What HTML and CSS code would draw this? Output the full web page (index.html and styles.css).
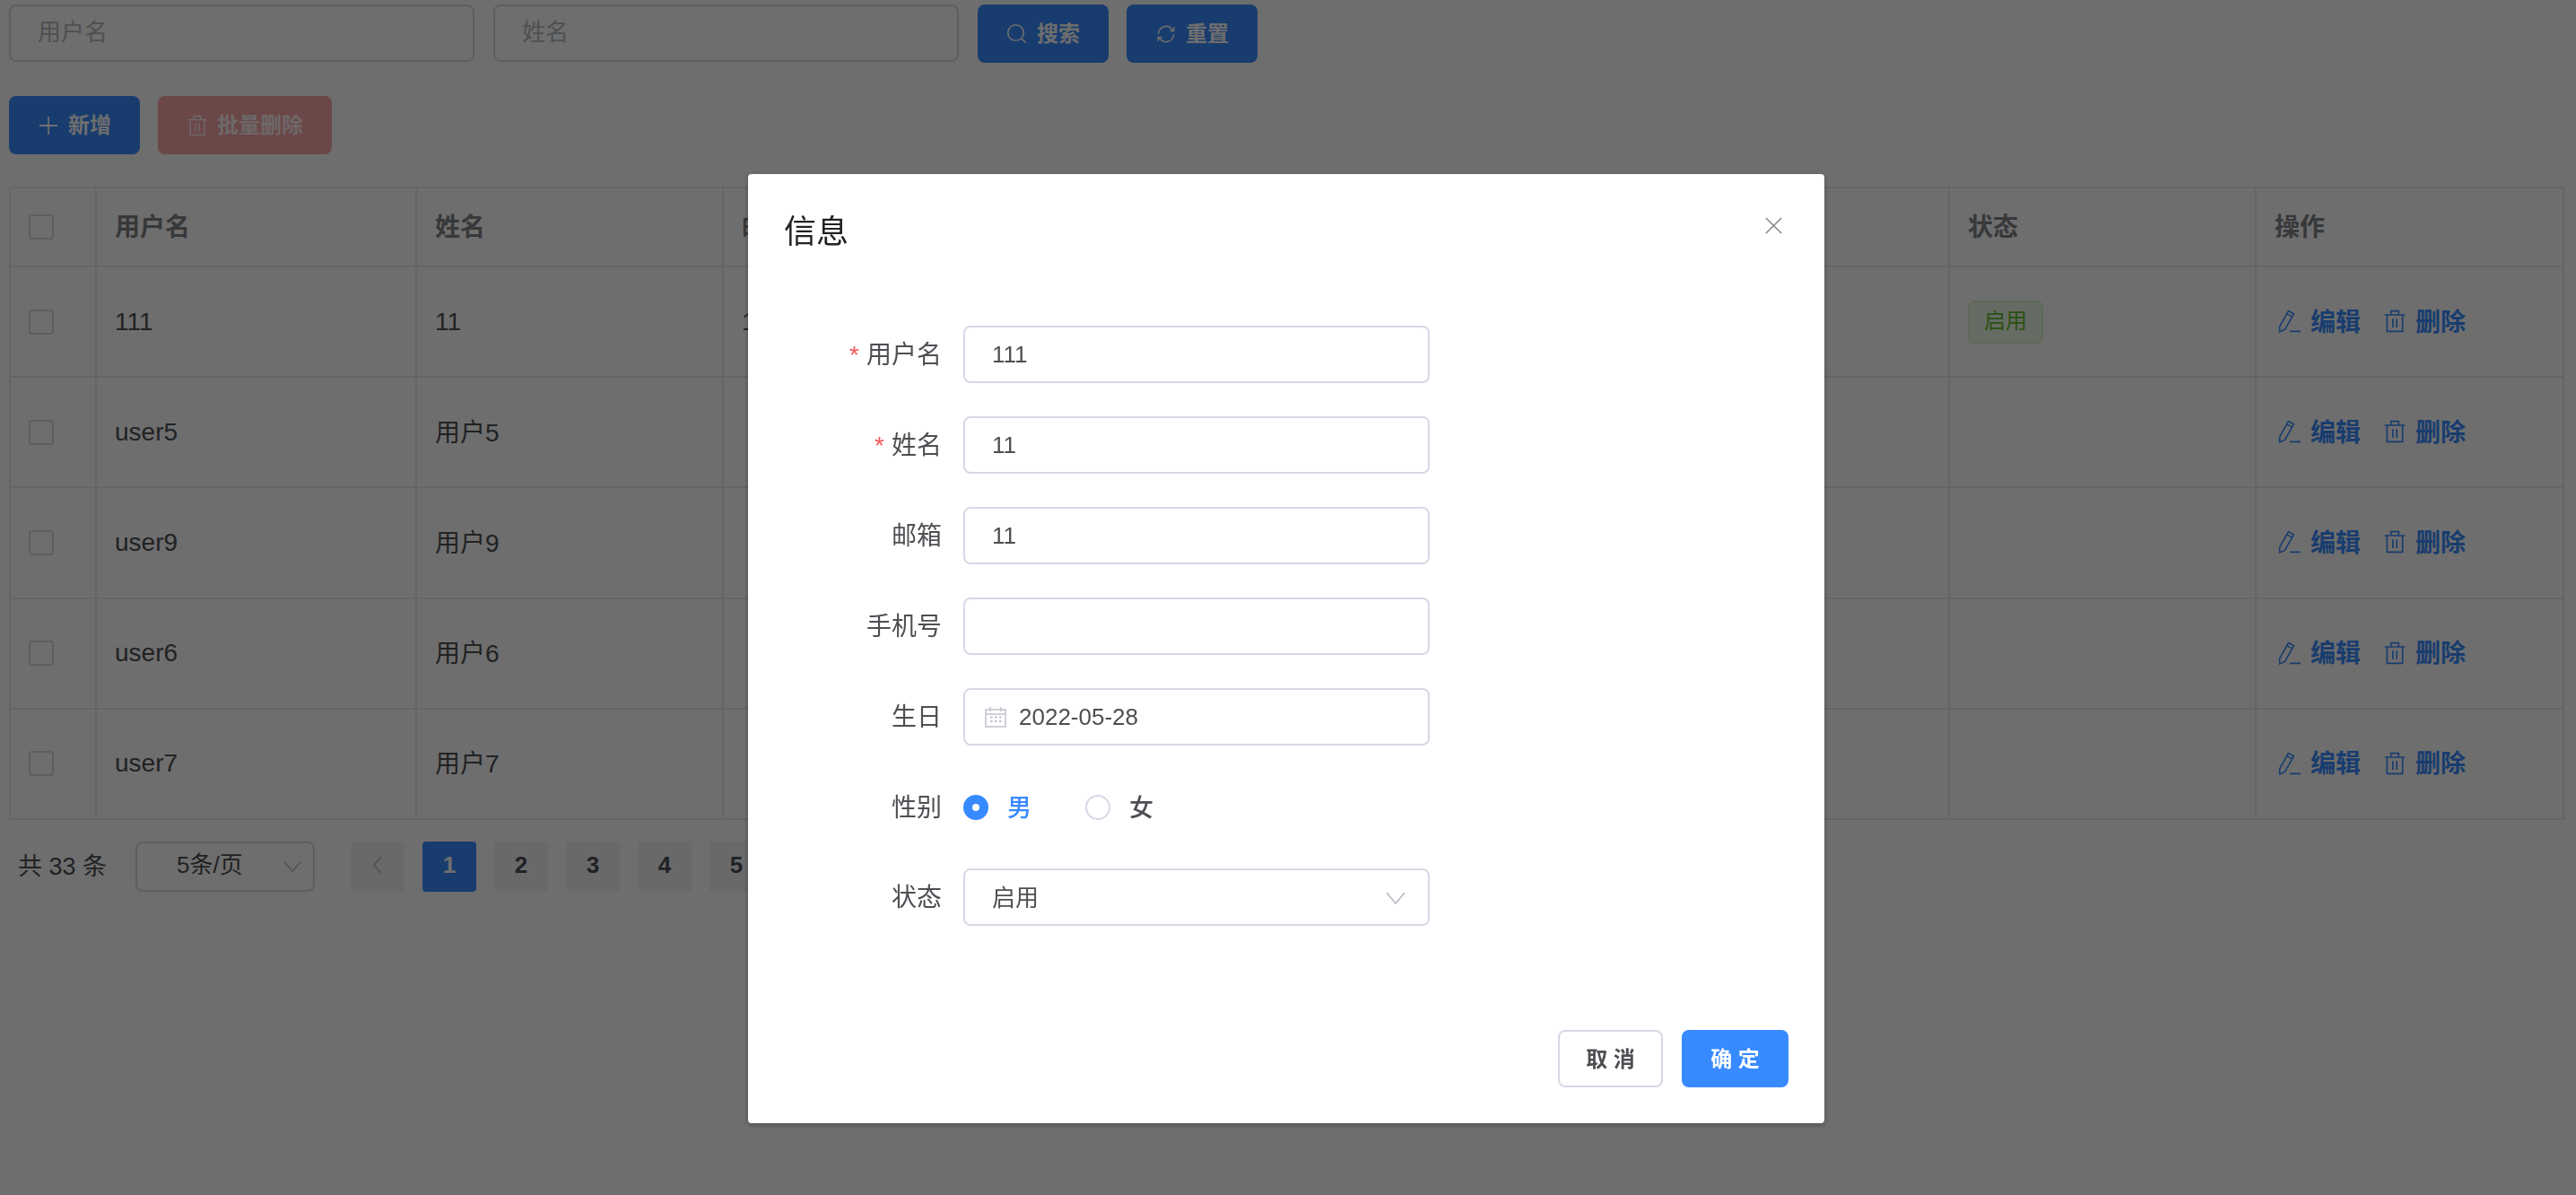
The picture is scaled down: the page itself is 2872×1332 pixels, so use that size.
FILE: index.html
```html
<!DOCTYPE html>
<html lang="zh-CN">
<head>
<meta charset="utf-8">
<title>用户管理</title>
<link rel="stylesheet" href="styles.css">
</head>
<body>
<svg class="defs" width="0" height="0" aria-hidden="true">
  <symbol id="i-trash" viewBox="0 0 24 24"><path d="M1.500 5.500h21M8 5.500V1.500h8v4M4 5.500v17h16v-17M10 9.500v9M14 9.500v9" fill="none" stroke="currentColor" stroke-width="1.500"/></symbol>
  <symbol id="i-edit" viewBox="0 0 24 24"><path d="M1.500 17.500L10.500 1.500l5.500 3L7 20.500 1.500 23zM9 4.500l5.500 3M12 22.500h11" fill="none" stroke="currentColor" stroke-width="1.500"/></symbol>
  <symbol id="i-search" viewBox="0 0 24 24"><circle cx="10.500" cy="10.500" r="8.800" fill="none" stroke="currentColor" stroke-width="1.600"/><path d="M17 17l4.500 4.500" stroke="currentColor" stroke-width="1.600"/></symbol>
  <symbol id="i-refresh" viewBox="0 0 24 24"><path d="M3.500 12a8.500 8.500 0 0 1 15-5.500l1.500 1.800M20.500 12a8.500 8.500 0 0 1-15 5.500L4 15.700M16.500 8.500h4.200V4M7.500 15.500H3.300V20" fill="none" stroke="currentColor" stroke-width="1.500"/></symbol>
  <symbol id="i-plus" viewBox="0 0 24 24"><path d="M2 12h20M12 2v20" stroke="currentColor" stroke-width="1.800"/></symbol>
  <symbol id="i-down" viewBox="0 0 24 24"><path d="M2 7l10 12L22 7" fill="none" stroke="currentColor" stroke-width="1.500"/></symbol>
</svg>

<main class="page">
  <div class="search-row">
    <div class="field">用户名</div>
    <div class="field">姓名</div>
    <button class="btn primary"><svg class="btn-icon"><use href="#i-search"/></svg><span>搜索</span></button>
    <button class="btn primary"><svg class="btn-icon"><use href="#i-refresh"/></svg><span>重置</span></button>
  </div>
  <div class="tool-row">
    <button class="btn primary"><svg class="btn-icon"><use href="#i-plus"/></svg><span>新增</span></button>
    <button class="btn danger"><svg class="btn-icon"><use href="#i-trash"/></svg><span>批量删除</span></button>
  </div>

  <table class="grid">
    <colgroup><col class="c-check"><col class="c-user"><col class="c-col"><col class="c-col"><col class="c-narrow"><col class="c-col"><col class="c-col"><col class="c-col"><col class="c-last"></colgroup>
    <thead>
      <tr><th><span class="check"></span></th><th>用户名</th><th>姓名</th><th>邮箱</th><th></th><th></th><th></th><th>状态</th><th>操作</th></tr>
    </thead>
    <tbody>
      <tr><td><span class="check"></span></td><td>111</td><td>11</td><td>11</td><td></td><td></td><td></td><td><span class="tag">启用</span></td><td><div class="ops"><a><svg class="op-icon"><use href="#i-edit"/></svg>编辑</a><a><svg class="op-icon"><use href="#i-trash"/></svg>删除</a></div></td></tr>
      <tr><td><span class="check"></span></td><td>user5</td><td class="cjk">用户5</td><td></td><td></td><td></td><td></td><td></td><td><div class="ops"><a><svg class="op-icon"><use href="#i-edit"/></svg>编辑</a><a><svg class="op-icon"><use href="#i-trash"/></svg>删除</a></div></td></tr>
      <tr><td><span class="check"></span></td><td>user9</td><td class="cjk">用户9</td><td></td><td></td><td></td><td></td><td></td><td><div class="ops"><a><svg class="op-icon"><use href="#i-edit"/></svg>编辑</a><a><svg class="op-icon"><use href="#i-trash"/></svg>删除</a></div></td></tr>
      <tr><td><span class="check"></span></td><td>user6</td><td class="cjk">用户6</td><td></td><td></td><td></td><td></td><td></td><td><div class="ops"><a><svg class="op-icon"><use href="#i-edit"/></svg>编辑</a><a><svg class="op-icon"><use href="#i-trash"/></svg>删除</a></div></td></tr>
      <tr><td><span class="check"></span></td><td>user7</td><td class="cjk">用户7</td><td></td><td></td><td></td><td></td><td></td><td><div class="ops"><a><svg class="op-icon"><use href="#i-edit"/></svg>编辑</a><a><svg class="op-icon"><use href="#i-trash"/></svg>删除</a></div></td></tr>
    </tbody>
  </table>

  <div class="pager">
    <span class="total">共 33 条</span>
    <div class="size">5条/页<svg class="size-arrow"><use href="#i-down"/></svg></div>
    <div class="pages">
      <span class="pg prev"><svg class="prev-arrow" viewBox="0 0 12 24"><path d="M10 3L2 12l8 9" fill="none" stroke="currentColor" stroke-width="1.600"/></svg></span>
      <span class="pg on">1</span><span class="pg">2</span><span class="pg">3</span><span class="pg">4</span><span class="pg">5</span>
    </div>
  </div>
</main>

<div class="overlay">
  <section class="dialog">
    <header class="dialog-head">
      <h2>信息</h2>
      <svg class="close" viewBox="0 0 20 20"><path d="M1 1l18 18M19 1L1 19" stroke="currentColor" stroke-width="1.500"/></svg>
    </header>
    <form class="form">
      <div class="row"><label class="req">用户名</label><div class="input">111</div></div>
      <div class="row"><label class="req">姓名</label><div class="input">11</div></div>
      <div class="row"><label>邮箱</label><div class="input">11</div></div>
      <div class="row"><label>手机号</label><div class="input"></div></div>
      <div class="row"><label>生日</label><div class="input date">
        <svg class="cal" viewBox="0 0 24 24"><path d="M1 4h22v19H1zM1 9h22M6 1v5M18 1v5" fill="none" stroke="#c0c4cc" stroke-width="1.500"/><path d="M6 12.500h2.500M11 12.500h2.500M16 12.500h2.500M6 17h2.500M11 17h2.500M16 17h2.500" stroke="#c0c4cc" stroke-width="2"/></svg>
        2022-05-28</div></div>
      <div class="row radios"><label>性别</label>
        <div class="radio on"><i></i><span>男</span></div>
        <div class="radio"><i></i><span>女</span></div>
      </div>
      <div class="row"><label>状态</label><div class="input select"><span>启用</span><svg class="sel-arrow"><use href="#i-down"/></svg></div></div>
    </form>
    <footer class="dialog-foot">
      <button class="btn plain"><span>取 消</span></button>
      <button class="btn solid"><span>确 定</span></button>
    </footer>
  </section>
</div>
</body>
</html>
```

FILE: styles.css
```css
* { box-sizing: border-box; }
html, body { margin: 0; height: 100%; }
body {
  width: 2872px;
  height: 1332px;
  overflow: hidden;
  background: #fff;
  color: #4d4f53;
  font-family: "Liberation Sans", "Noto Sans CJK SC", sans-serif;
  font-size: 28px;
}
.defs { position: absolute; }
.page { padding: 5px 15px 0 10px; }

.search-row { display: flex; gap: 21px; height: 65px; }
.search-row .btn + .btn { margin-left: -1px; }
.field {
  width: 519px;
  height: 64px;
  padding: 0 30px;
  border: 2px solid #d6d9e5;
  border-radius: 8px;
  color: #b4b8c1;
  line-height: 58px;
  font-size: 26px;
}
.btn {
  display: inline-flex;
  align-items: center;
  justify-content: center;
  gap: 10px;
  height: 65px;
  padding: 0 30px;
  border: 2px solid transparent;
  border-radius: 8px;
  font: 500 24px "Liberation Sans", "Noto Sans CJK SC", sans-serif;
  color: #fff;
}
.btn span { padding-bottom: 4px; font-weight: 700; }
.btn-icon { width: 24px; height: 24px; }
.primary { width: 146px; background: #388cff; }
.danger { width: 194px; background: #f9a5a7; color: #fff; }
.danger span, .danger svg { opacity: .85; }
.tool-row { display: flex; gap: 20px; margin-top: 37px; }

.grid {
  width: 2847px;
  margin-top: 36px;
  table-layout: fixed;
  border-collapse: collapse;
}
.c-check { width: 96px; }
.c-user { width: 357px; }
.c-col { width: 342px; }
.c-narrow { width: 341px; }
.c-last { width: 343px; }
.grid th, .grid td {
  padding: 0 20px;
  border: 2px solid #e7eaf3;
  text-align: left;
  white-space: nowrap;
}
.grid th { height: 88px; padding-bottom: 4px; color: #7f8287; font-weight: 700; }
.grid td { height: 123.200px; }
.grid td.cjk { padding-bottom: 4px; }
.grid th:first-child { padding-bottom: 0; }
.check {
  display: block;
  width: 28px;
  height: 28px;
  border: 2px solid #d6d9e5;
  border-radius: 4px;
}
.tag {
  display: inline-block;
  width: 84px;
  height: 48px;
  border: 2px solid #dbf1cf;
  border-radius: 8px;
  background: #edf8e7;
  color: #5fba30;
  font-size: 24px;
  line-height: 42px;
  text-align: center;
  vertical-align: middle;
}
.ops { display: flex; gap: 25px; margin-left: 4px; padding-bottom: 4px; }
.ops a { display: inline-flex; align-items: center; gap: 10px; color: #388cff; font-weight: 700; }
.op-icon { width: 26px; height: 26px; margin-top: 3px; }

.pager { display: flex; align-items: center; height: 56px; margin-top: 24px; padding-left: 10px; }
.total { width: 131px; padding-bottom: 4px; font-size: 27px; }
.size {
  position: relative;
  width: 200px;
  height: 56px;
  padding-left: 44px;
  border: 2px solid #d6d9e5;
  border-radius: 8px;
  font-size: 26px;
  line-height: 49px;
}
.size-arrow { position: absolute; right: 12px; top: 14px; width: 22px; height: 22px; color: #b4b8c1; }
.pages { display: flex; gap: 20px; margin-left: 40px; }
.pg {
  display: flex;
  align-items: center;
  justify-content: center;
  width: 60px;
  height: 56px;
  padding-bottom: 3px;
  border-radius: 4px;
  background: #f4f4f5;
  font-size: 26px;
  font-weight: 700;
}
.pg.on { background: #388cff; color: #fff; }
.pg.prev { color: #b4b8c1; }
.prev-arrow { width: 12px; height: 24px; }

.overlay {
  position: fixed;
  inset: 0;
  background: rgba(0, 0, 0, .57);
}
.dialog {
  position: absolute;
  left: 834px;
  top: 194px;
  width: 1200px;
  height: 1058px;
  display: flex;
  flex-direction: column;
  border-radius: 4px;
  background: #fff;
  box-shadow: 0 2px 6px rgba(0, 0, 0, .3);
}
.dialog-head { display: flex; justify-content: space-between; height: 169px; padding: 41px 47px 0 40px; }
.dialog-head h2 { margin: 0; color: #212224; font-size: 36px; font-weight: 400; line-height: 48px; }
.close { width: 19px; height: 19px; margin-top: 7px; color: #7f8287; }

.form { flex: 1; padding: 0 40px; }
.row { display: flex; align-items: center; height: 64px; margin-bottom: 37px; }
.row.radios { margin-bottom: 36px; }
.row label { width: 200px; padding-right: 24px; padding-bottom: 4px; text-align: right; font-size: 28px; }
.req::before { content: "*"; margin-right: 8px; color: #f35959; }
.input {
  display: flex;
  align-items: center;
  width: 520px;
  height: 64px;
  padding: 0 30px;
  border: 2px solid #d6d9e5;
  border-radius: 8px;
  font-size: 26px;
}
.input.date { padding-left: 22px; gap: 14px; }
.cal { width: 24px; height: 24px; }
.input.select { justify-content: space-between; padding-right: 24px; }
.input.select span { padding-bottom: 3px; }
.sel-arrow { width: 24px; height: 24px; color: #b4b8c1; }
.radio { display: flex; align-items: center; gap: 21px; width: 136px; font-size: 27px; font-weight: 500; }
.radio span { padding-bottom: 3px; }
.radio i {
  width: 28px;
  height: 28px;
  border: 2px solid #d6d9e5;
  border-radius: 50%;
}
.radio.on { color: #378aff; }
.radio.on i { border: 10px solid #378aff; background: #fff; }

.dialog-foot { display: flex; justify-content: flex-end; gap: 21px; padding: 0 40px 40px; }
.plain { width: 117px; height: 64px; padding: 0; border-color: #d6d9e5; background: #fff; color: #4d4f53; font-weight: 700; }
.solid { width: 119px; height: 64px; padding: 0; background: #378aff; color: #fff; font-weight: 700; }
```
